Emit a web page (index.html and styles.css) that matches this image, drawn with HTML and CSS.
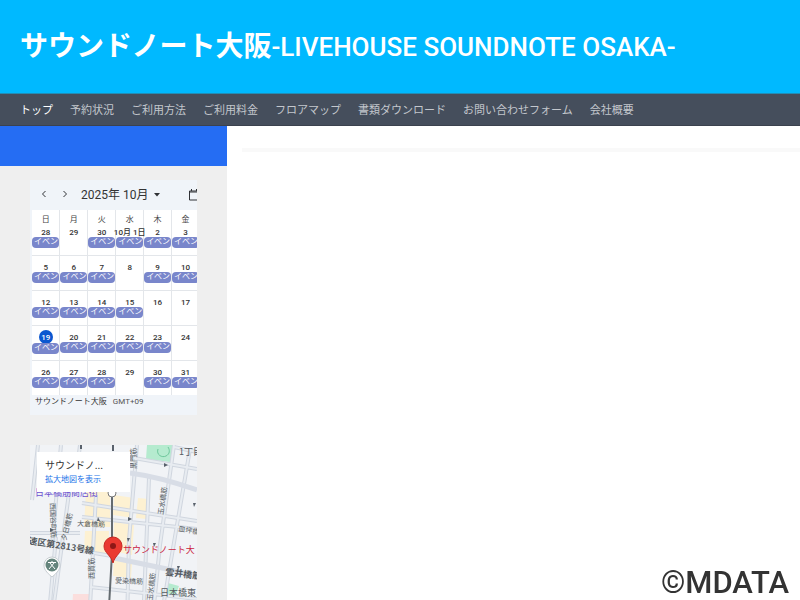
FILE: index.html
```html
<!DOCTYPE html>
<html lang="ja">
<head>
<meta charset="utf-8">
<meta name="viewport" content="width=device-width, initial-scale=1">
<title>サウンドノート大阪-LIVEHOUSE SOUNDNOTE OSAKA-</title>
<link rel="stylesheet" href="styles.css">
</head>
<body>
<header class="site-header">
  <h1 class="site-title"><a href="#">サウンドノート大阪<span class="latin">-LIVEHOUSE SOUNDNOTE OSAKA-</span></a></h1>
</header>
<nav class="site-nav">
  <a class="current" href="#">トップ</a>
  <a href="#">予約状況</a>
  <a href="#">ご利用方法</a>
  <a href="#">ご利用料金</a>
  <a href="#">フロアマップ</a>
  <a href="#">書類ダウンロード</a>
  <a href="#">お問い合わせフォーム</a>
  <a href="#">会社概要</a>
</nav>
<div class="page">
  <aside class="sidebar">
    <div class="sidebar-top"></div>
    <div class="widgets">
      <section class="calendar">
        <div class="cal-bar">
          <button class="arrow" type="button" aria-label="前"><svg width="6" height="8" viewBox="0 0 6 8"><path d="M4.5 1 1.5 4l3 3"/></svg></button>
          <button class="arrow" type="button" aria-label="次"><svg width="6" height="8" viewBox="0 0 6 8"><path d="M1.5 1l3 3-3 3"/></svg></button>
          <button class="month" type="button">2025年 10月 <svg width="6" height="4" viewBox="0 0 6 4"><path d="M0 0h6L3 3.500z"/></svg></button>
          <button class="today" type="button" aria-label="今日"><svg width="12" height="12" viewBox="0 0 12 12"><path d="M1.500 2h9v9h-9zM1.500 3h9M3.500 0v2M8.500 0v2"/></svg></button>
        </div>
        <table class="cal-grid">
          <thead><tr><th>日</th><th>月</th><th>火</th><th>水</th><th>木</th><th>金</th></tr></thead>
          <tbody>
            <tr><td>28<a href="#">イベン</a></td><td>29</td><td>30<a href="#">イベン</a></td><td><span class="first">10月 1日</span><a href="#">イベン</a></td><td>2<a href="#">イベン</a></td><td>3<a href="#">イベン</a></td></tr>
            <tr><td>5<a href="#">イベン</a></td><td>6<a href="#">イベン</a></td><td>7<a href="#">イベン</a></td><td>8</td><td>9<a href="#">イベン</a></td><td>10<a href="#">イベン</a></td></tr>
            <tr><td>12<a href="#">イベン</a></td><td>13<a href="#">イベン</a></td><td>14<a href="#">イベン</a></td><td>15<a href="#">イベン</a></td><td>16</td><td>17</td></tr>
            <tr><td><span class="now">19</span><a href="#">イベン</a></td><td>20<a href="#">イベン</a></td><td>21<a href="#">イベン</a></td><td>22<a href="#">イベン</a></td><td>23<a href="#">イベン</a></td><td>24</td></tr>
            <tr><td>26<a href="#">イベン</a></td><td>27<a href="#">イベン</a></td><td>28<a href="#">イベン</a></td><td>29</td><td>30<a href="#">イベン</a></td><td>31<a href="#">イベン</a></td></tr>
          </tbody>
        </table>
        <p class="cal-foot">サウンドノート大阪 <span>GMT+09</span></p>
      </section>
      <section class="map">
        <svg class="map-art" viewBox="0 0 167 180" preserveAspectRatio="xMinYMin slice">
          <rect width="167" height="180" fill="#f1f3f6"/>
          <g fill="#fdf1d2">
            <path d="M56 46h24v36H54zM84 50l20 3-1 20-20-3zM108 53l11 1-2 20-11-1zM55 86h24l-1 24-24-5zM84 77l20 3-2 30-19-4zM84 114l18 4-1 15-18-2z"/>
          </g>
          <g fill="#b5ebcf"><path d="M117 0h27l-4 17-24-3zM138 138l11 3-4 10-12-4z"/></g>
          <path d="M43 149h17v31H41z" fill="#fbdedd"/>
          <path d="M128 4c-2 6 4 9 8 7s4-6 2-9" fill="none" stroke="#6dc79b"/>
          <g class="road-edge">
            <path d="M8 0 2 55M31 0 22 100M50 0l-6 50M107 0l-8 95-2 85M119 33l-6 147M144 0l-14 100-8 80M160 4l-12 70-18 106M39 48 21 180M66 50 59 180M52 58l115 18M52 72l115 12M104 13l63 11M144 2l23 5M52 106l30 5M60 142l107 12M0 88h50M26 92l-8 88"/>
          </g>
          <g class="road">
            <path d="M8 0 2 55M31 0 22 100M50 0l-6 50M107 0l-8 95-2 85M119 33l-6 147M144 0l-14 100-8 80M160 4l-12 70-18 106M39 48 21 180M66 50 59 180M52 58l115 18M52 72l115 12M104 13l63 11M144 2l23 5M52 106l30 5M60 142l107 12M0 88h50M26 92l-8 88"/>
          </g>
          <path d="M100 28q30 4 67 17M84 113l53 11 30 7" fill="none" stroke="#d8dde6" stroke-width="5"/>
          <path d="M82 48v60l-4 72" fill="none" stroke="#646b70" stroke-width="2"/>
          <circle cx="82" cy="48" r="4" fill="#fff" stroke="#777"/>
          <g fill="#59616b"><path d="m134 18 4 2-4 2zM20 83l4 2-4 2zM98 72l4 2-4 2zM67 76l1-4 2 4zM100 93l-2 4-1-4zM126 98l-2 4-1-4zM150 121l-2 4-1-4zM166 58l-2 4-1-4zM50 4v-4h2v4zM82 0h2v6h-2z"/></g>
          <g class="map-text">
            <text x="5" y="51" class="purple">日本橋筋商店街</text>
            <text x="149" y="10" class="area">1丁目</text>
            <text transform="translate(106 24) rotate(-90)">黒門筋</text>
            <text transform="translate(133 70) rotate(-82)">玉水橋筋</text>
            <text transform="translate(20 58) rotate(88)">西国谷町筋</text>
            <text transform="translate(36 96) rotate(-76)">夕日橋筋</text>
            <text x="47" y="81" transform="rotate(2 47 81)">大倉橋筋</text>
            <text x="148" y="86" transform="rotate(10 148 86)">皿坪橋筋</text>
            <text x="-2" y="99" class="route" transform="rotate(9 0 99)">速区第2813号線</text>
            <text transform="translate(64 134) rotate(-90)">西貫筋</text>
            <text x="85" y="138" transform="rotate(2 85 138)">愛染橋筋</text>
            <text transform="translate(122 156) rotate(-83)">玉水橋筋</text>
            <text x="135" y="130" class="route" transform="rotate(7 135 130)">雲井橋筋</text>
            <text x="130" y="151" class="area">日本橋東</text>
            <text x="93" y="108" class="place">サウンドノート大</text>
          </g>
          <path d="M22 132c-6-5-8-8-8-12a8 8 0 0 1 16 0c0 4-2 7-8 12z" fill="#fff" stroke="#c7cdd1"/>
          <circle cx="22" cy="120" r="6.500" fill="#64847c"/>
          <path d="M18 117.500h8M22 116v2M19 124l5-6M25 124l-5-6" fill="none" stroke="#fff"/>
          <path d="M83 118c-2-8-9-10-9-17a9 9 0 0 1 18 0c0 7-7 9-9 17z" fill="#ea3930" stroke="#c72822"/>
          <circle cx="83" cy="101" r="3" fill="#8d1816"/>
        </svg>
        <div class="map-card"><strong>サウンドノ...</strong><a href="#">拡大地図を表示</a></div>
      </section>
    </div>
  </aside>
  <main class="content"><hr></main>
</div>
<div class="credit">©MDATA</div>
</body>
</html>
```
FILE: styles.css
```css
* { box-sizing: border-box; }
body {
  margin: 0;
  height: 100vh;
  overflow: hidden;
  display: flex;
  flex-direction: column;
  background: #fff;
  font-family: "Liberation Sans", "Noto Sans CJK JP", sans-serif;
  color: #333;
}
a { color: inherit; text-decoration: none; }
button { border: 0; padding: 0; background: none; font: inherit; color: inherit; }

.site-header { flex: none; background: #00b9ff; padding: 22px 20px 27px; }
.site-title {
  margin: 0;
  height: 44px;
  font: 700 28px/44px "Noto Sans CJK JP", sans-serif;
  color: #fff;
  white-space: nowrap;
}
.latin { font-family: Roboto, sans-serif; font-weight: 500; font-size: 26px; line-height: 1; }

.site-nav {
  flex: none;
  display: flex;
  gap: 17px;
  padding: 0 20px;
  background: #454e5c;
  border-top: 1px solid #238db5;
  border-bottom: 1px solid #3b424e;
  font: 11px/31px "Noto Sans CJK JP", sans-serif;
  color: #c3c7cd;
  white-space: nowrap;
}
.site-nav .current { color: #fff; }

.page { flex: 1; min-height: 0; display: flex; }
.sidebar { width: 227px; flex: none; background: #efefef; overflow: hidden; }
.sidebar-top { height: 40px; background: #256df3; }
.widgets { padding: 14px 30px 0; display: flex; flex-direction: column; gap: 30px; }
.content { flex: 1; padding: 22px 0 0 15px; }
.content hr { margin: 0; border: 0; height: 4px; background: #f9f9f9; }

.calendar { height: 235px; overflow: hidden; background: #f0f4f9; }
.cal-bar { display: flex; align-items: center; height: 30px; padding-left: 9px; }
.cal-bar svg { fill: none; stroke: #303236; display: block; }
.arrow { width: 21px; flex: none; }
.arrow svg { margin: 0 auto 2px 2px; }
.month { flex: none; display: flex; align-items: center; gap: 6px; font: 12px/20px Roboto, "Noto Sans CJK JP", sans-serif; white-space: nowrap; }
.month svg { fill: #303236; stroke: none; }
.today { flex: none; margin-left: 28px; }

.cal-grid {
  table-layout: fixed;
  width: 168px;
  margin-left: 2px;
  border-collapse: collapse;
  background: #fff;
  font: 500 8px/10px Roboto, "Noto Sans CJK JP", sans-serif;
  text-align: center;
}
.cal-grid th { height: 17px; padding: 3px 0 0; font-weight: 400; font-size: 8px; line-height: 10px; color: #444; }
.cal-grid th, .cal-grid td { border-right: 1px solid #e3e6ea; }
.cal-grid td { height: 35px; padding: 7px 0 0; vertical-align: top; border-bottom: 1px solid #e3e6ea; white-space: nowrap; }
.cal-grid tbody tr:first-child td { height: 28px; padding-top: 1px; }
.cal-grid tbody tr:last-child td { border-bottom: 0; }
.cal-grid td a {
  display: block;
  width: 27px;
  height: 11px;
  padding-left: 2px;
  margin-top: -1px;
  border-radius: 4px;
  background: #7986cb;
  color: #fff;
  font-size: 8px;
  font-weight: 400;
  line-height: 10px;
  text-align: left;
}
.first { display: block; margin: 0 -4px; }
.now { display: block; width: 14px; height: 14px; margin: -3px auto -1px; border-radius: 50%; background: #0b57d0; color: #fff; line-height: 15px; }
.cal-foot { margin: 0; padding-left: 5px; font: 8px/14px Roboto, "Noto Sans CJK JP", sans-serif; white-space: nowrap; }
.cal-foot span { margin-left: 4px; color: #555; }

.map { position: relative; height: 180px; overflow: hidden; }
.map-art { display: block; width: 100%; height: 180px; }
.road-edge { fill: none; stroke: #d0d6df; stroke-width: 4; }
.road { fill: none; stroke: #e8ecf1; stroke-width: 2; }
.map-text { font: 7px "Noto Sans CJK JP", sans-serif; fill: #555b61; }
.map-text .purple { font-size: 9px; fill: #6b4fd0; }
.map-text .area { font-size: 9px; }
.map-text .route { font-size: 9px; font-weight: 700; }
.map-text .place { font-size: 9px; fill: #cb2440; }
.map-card {
  position: absolute;
  left: 7px;
  top: 7px;
  width: 93px;
  height: 40px;
  padding: 6px 8px;
  background: #fff;
  font: 8px/14px "Noto Sans CJK JP", sans-serif;
}
.map-card strong { display: block; font-size: 10px; font-weight: 400; }
.map-card a { display: block; color: #1a73e8; }

.credit { position: fixed; right: 11px; bottom: 0; font: 500 31px/34px Roboto, sans-serif; color: #333; }
```
